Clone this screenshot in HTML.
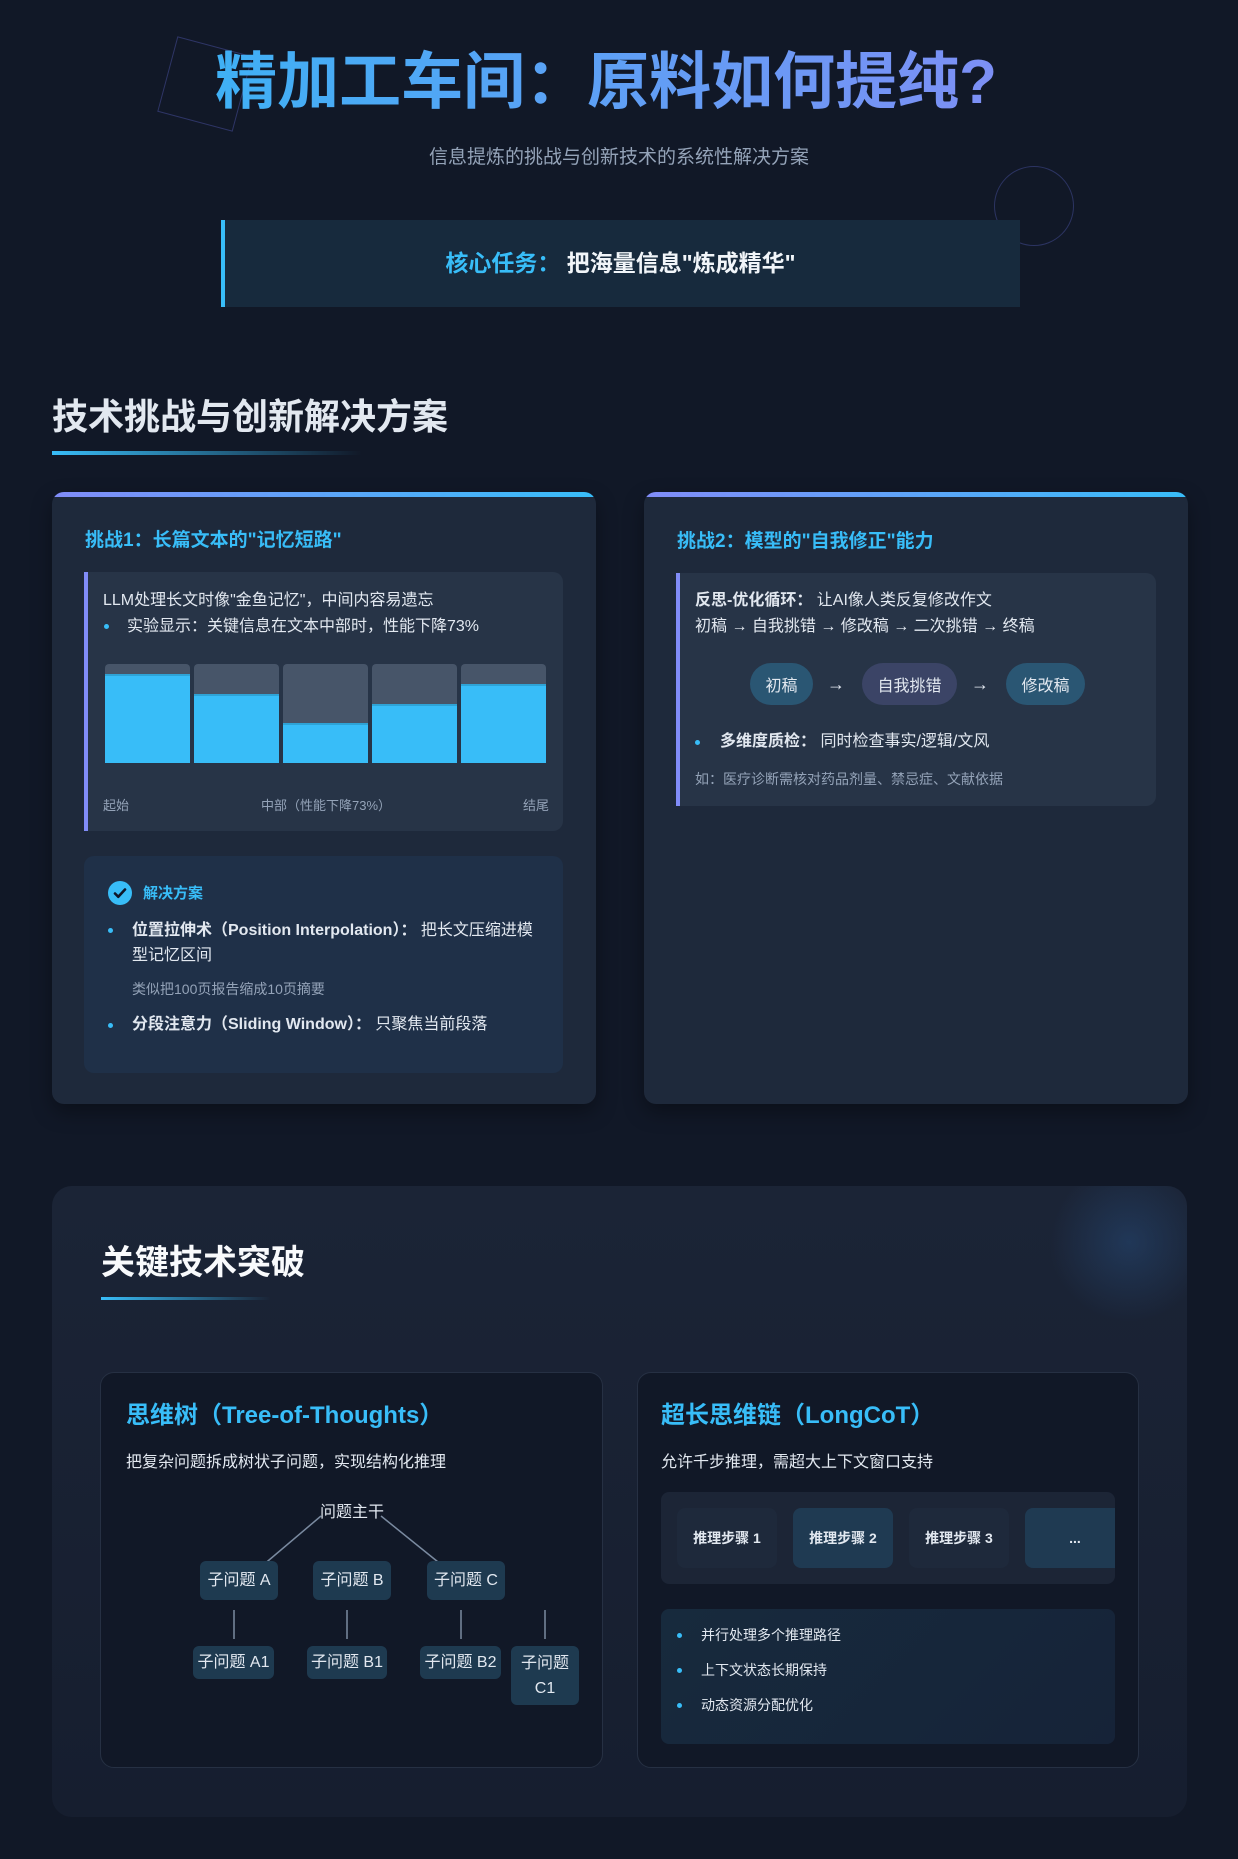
<!DOCTYPE html>
<html><head><meta charset="utf-8"><style>
*{margin:0;padding:0;box-sizing:border-box}
html{width:1238px;height:1859px;overflow:hidden}
body{width:1238px;height:1859px;background:#111827;font-family:"Liberation Sans","Noto Sans CJK SC",sans-serif;color:#e2e8f0;position:relative;overflow:hidden}
.a{position:absolute}
.t{white-space:nowrap;line-height:1}
.bar{position:absolute;top:664px;width:85px;height:99px;background:#475569;border-radius:4px 4px 0 0;overflow:hidden}
.bar i{position:absolute;left:0;right:0;bottom:0;background:#38bdf8;border-top:2px solid #2ea3d6}
.dot{position:absolute;width:6px;height:6px;border-radius:50%;background:#38bdf8}
.pill{position:absolute;top:663px;height:42px;border-radius:21px;background:#2a5673;color:#e2e8f0;font-size:16px;display:flex;align-items:center;justify-content:center}
.nb{position:absolute;background:#1e3a50;border-radius:6px;color:#e2e8f0;font-size:16px;display:flex;align-items:center;justify-content:center;text-align:center;line-height:25px}
.step{position:absolute;top:16px;height:60px;border-radius:8px;font-size:14px;font-weight:bold;display:flex;align-items:center;justify-content:center;color:#e2e8f0}
</style></head><body>
<div class="a" style="left:166px;top:45px;width:78px;height:78px;border:1.5px solid #2e3566;transform:rotate(15deg)"></div>
<div class="a" style="left:994px;top:166px;width:80px;height:80px;border:1.5px solid #2c3462;border-radius:50%"></div>
<div class="a t" style="left:-13px;width:1238px;top:52px;text-align:center;font-size:62px;font-weight:bold;"><span style="background:linear-gradient(90deg,#3fb0f5,#7d8ff5);-webkit-background-clip:text;background-clip:text;color:transparent">精加工车间：原料如何提纯?</span></div>
<div class="a t" style="left:0;width:1238px;top:148px;text-align:center;font-size:19px;color:#94a3b8">信息提炼的挑战与创新技术的系统性解决方案</div>
<div class="a" style="left:221px;top:220px;width:799px;height:87px;background:#172a3d;border-left:4px solid #38bdf8"></div>
<div class="a t" style="left:221px;width:799px;top:252px;text-align:center;font-size:23px;font-weight:bold"><span style="color:#38bdf8">核心任务：</span> <span style="color:#f1f5f9">把海量信息"炼成精华"</span></div>

<div class="a t" style="left:52px;top:399px;font-size:36px;font-weight:bold;color:#e2e8f0">技术挑战与创新解决方案</div>
<div class="a" style="left:52px;top:451px;width:310px;height:4px;background:linear-gradient(90deg,#38bdf8,rgba(56,189,248,0))"></div>

<div class="a" style="left:52px;top:492px;width:544px;height:612px;background:#1e293b;border-radius:12px;overflow:hidden;box-shadow:0 8px 20px rgba(0,0,0,.35)"><div style="height:5px;background:linear-gradient(90deg,#818cf8,#38bdf8)"></div></div>
<div class="a t" style="left:85px;top:531px;font-size:19px;font-weight:bold;color:#38bdf8">挑战1：长篇文本的"记忆短路"</div>
<div class="a" style="left:84px;top:572px;width:479px;height:259px;background:#273447;border-left:4px solid #818cf8;border-radius:0 10px 10px 0"></div>
<div class="a t" style="left:103px;top:593px;font-size:16px;color:#e2e8f0">LLM处理长文时像"金鱼记忆"，中间内容易遗忘</div>
<div class="dot" style="left:104px;top:624px;width:5px;height:5px"></div>
<div class="a t" style="left:127px;top:619px;font-size:16px;color:#e2e8f0">实验显示：关键信息在文本中部时，性能下降73%</div>
<div class="bar" style="left:105px"><i style="height:90%"></i></div>
<div class="bar" style="left:194px"><i style="height:70%"></i></div>
<div class="bar" style="left:283px"><i style="height:40%"></i></div>
<div class="bar" style="left:372px"><i style="height:60%"></i></div>
<div class="bar" style="left:461px"><i style="height:80%"></i></div>
<div class="a t" style="left:103px;top:799px;font-size:13px;color:#94a3b8">起始</div>
<div class="a t" style="left:261px;top:799px;font-size:13px;color:#94a3b8">中部（性能下降73%）</div>
<div class="a t" style="left:523px;top:799px;font-size:13px;color:#94a3b8">结尾</div>

<div class="a" style="left:84px;top:856px;width:479px;height:217px;background:#1f3048;border-radius:10px"></div>
<svg class="a" style="left:108px;top:881px" width="24" height="24"><circle cx="12" cy="12" r="12" fill="#38bdf8"/><path d="M7 12.5l3.3 3.3L17 8.5" stroke="#0f172a" stroke-width="2.6" fill="none" stroke-linecap="round" stroke-linejoin="round"/></svg>
<div class="a t" style="left:143px;top:886px;font-size:15px;font-weight:bold;color:#38bdf8">解决方案</div>
<div class="dot" style="left:108px;top:928px;width:5px;height:5px"></div>
<div class="a" style="left:132px;top:918px;width:405px;font-size:16px;line-height:25px;color:#e2e8f0"><b>位置拉伸术（Position Interpolation）：</b> 把长文压缩进模型记忆区间</div>
<div class="a t" style="left:132px;top:982px;font-size:14px;color:#94a3b8">类似把100页报告缩成10页摘要</div>
<div class="dot" style="left:108px;top:1023px;width:5px;height:5px"></div>
<div class="a t" style="left:132px;top:1017px;font-size:16px;color:#e2e8f0"><b>分段注意力（Sliding Window）：</b> 只聚焦当前段落</div>

<div class="a" style="left:644px;top:492px;width:544px;height:612px;background:#1e293b;border-radius:12px;overflow:hidden;box-shadow:0 8px 20px rgba(0,0,0,.35)"><div style="height:5px;background:linear-gradient(90deg,#818cf8,#38bdf8)"></div></div>
<div class="a t" style="left:677px;top:532px;font-size:19px;font-weight:bold;color:#38bdf8">挑战2：模型的"自我修正"能力</div>
<div class="a" style="left:676px;top:573px;width:480px;height:233px;background:#273447;border-left:4px solid #818cf8;border-radius:0 10px 10px 0"></div>
<div class="a t" style="left:695px;top:593px;font-size:16px;color:#e2e8f0"><b>反思-优化循环：</b> 让AI像人类反复修改作文</div>
<div class="a t" style="left:695px;top:619px;font-size:16px;color:#e2e8f0">初稿 → 自我挑错 → 修改稿 → 二次挑错 → 终稿</div>
<div class="pill" style="left:750px;width:63px">初稿</div>
<div class="a t" style="left:827px;top:675px;font-size:18px;color:#e2e8f0">→</div>
<div class="pill" style="left:862px;width:95px;background:#3b4466">自我挑错</div>
<div class="a t" style="left:971px;top:675px;font-size:18px;color:#e2e8f0">→</div>
<div class="pill" style="left:1006px;width:79px">修改稿</div>
<div class="dot" style="left:695px;top:740px;width:5px;height:5px"></div>
<div class="a t" style="left:720px;top:734px;font-size:16px;color:#e2e8f0"><b>多维度质检：</b> 同时检查事实/逻辑/文风</div>
<div class="a t" style="left:695px;top:772px;font-size:14px;color:#94a3b8">如：医疗诊断需核对药品剂量、禁忌症、文献依据</div>

<div class="a" style="left:52px;top:1186px;width:1135px;height:631px;border-radius:20px;background:linear-gradient(180deg,#1b2436,#161e2f);overflow:hidden">
<div class="a" style="left:997px;top:-24px;width:160px;height:160px;border-radius:50%;background:radial-gradient(circle,rgba(40,80,130,.45),rgba(40,80,130,0) 70%)"></div>
</div>
<div class="a t" style="left:101px;top:1246px;font-size:34px;font-weight:bold;color:#f8fafc">关键技术突破</div>
<div class="a" style="left:101px;top:1297px;width:170px;height:3px;background:linear-gradient(90deg,#38bdf8,rgba(56,189,248,0))"></div>

<div class="a" style="left:100px;top:1372px;width:503px;height:396px;background:#111827;border:1px solid #263043;border-radius:14px"></div>
<div class="a t" style="left:126px;top:1404px;font-size:24px;font-weight:bold;color:#38bdf8">思维树（Tree-of-Thoughts）</div>
<div class="a t" style="left:126px;top:1455px;font-size:16px;color:#e2e8f0">把复杂问题拆成树状子问题，实现结构化推理</div>
<svg class="a" style="left:0;top:0" width="1238" height="1859"><g stroke="#7a8aa0" stroke-width="1.5"><line x1="321" y1="1516" x2="262" y2="1566"/><line x1="381" y1="1516" x2="443" y2="1566"/><line x1="234" y1="1610" x2="234" y2="1639"/><line x1="347" y1="1610" x2="347" y2="1639"/><line x1="461" y1="1610" x2="461" y2="1639"/><line x1="545" y1="1610" x2="545" y2="1639"/></g></svg>
<div class="a t" style="left:292px;top:1505px;width:120px;text-align:center;font-size:16px;color:#e2e8f0">问题主干</div>
<div class="nb" style="left:200px;top:1561px;width:78px;height:39px">子问题 A</div>
<div class="nb" style="left:313px;top:1561px;width:78px;height:39px">子问题 B</div>
<div class="nb" style="left:427px;top:1561px;width:78px;height:39px">子问题 C</div>
<div class="nb" style="left:193px;top:1646px;width:81px;height:33px">子问题 A1</div>
<div class="nb" style="left:307px;top:1646px;width:80px;height:33px">子问题 B1</div>
<div class="nb" style="left:420px;top:1646px;width:81px;height:33px">子问题 B2</div>
<div class="nb" style="left:511px;top:1646px;width:68px;height:59px">子问题<br>C1</div>

<div class="a" style="left:637px;top:1372px;width:502px;height:396px;background:#111827;border:1px solid #263043;border-radius:14px"></div>
<div class="a t" style="left:661px;top:1404px;font-size:24px;font-weight:bold;color:#38bdf8">超长思维链（LongCoT）</div>
<div class="a t" style="left:661px;top:1455px;font-size:16px;color:#e2e8f0">允许千步推理，需超大上下文窗口支持</div>
<div class="a" style="left:661px;top:1492px;width:454px;height:92px;background:#1c2536;border-radius:8px;overflow:hidden">
<div class="step" style="left:16px;width:100px;background:#1e293b">推理步骤 1</div>
<div class="step" style="left:132px;width:100px;background:#1f3a52">推理步骤 2</div>
<div class="step" style="left:248px;width:100px;background:#1e293b">推理步骤 3</div>
<div class="step" style="left:364px;width:100px;background:#1f3a52">...</div>
</div>
<div class="a" style="left:661px;top:1609px;width:454px;height:135px;background:linear-gradient(135deg,#172a3d,#162338);border-radius:8px"></div>
<div class="dot" style="left:677px;top:1633px;width:5px;height:5px"></div>
<div class="a t" style="left:701px;top:1628px;font-size:14px;color:#e2e8f0">并行处理多个推理路径</div>
<div class="dot" style="left:677px;top:1668px;width:5px;height:5px"></div>
<div class="a t" style="left:701px;top:1663px;font-size:14px;color:#e2e8f0">上下文状态长期保持</div>
<div class="dot" style="left:677px;top:1703px;width:5px;height:5px"></div>
<div class="a t" style="left:701px;top:1698px;font-size:14px;color:#e2e8f0">动态资源分配优化</div>
</body></html>
